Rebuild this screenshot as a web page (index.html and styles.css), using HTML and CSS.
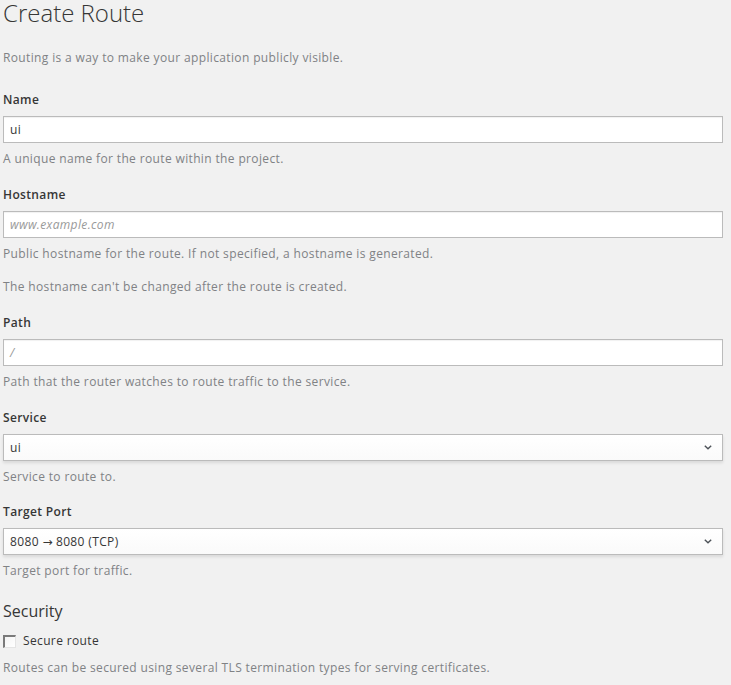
FILE: index.html
```html
<!DOCTYPE html>
<html lang="en">
<head>
<meta charset="utf-8">
<title>Create Route</title>
<link rel="stylesheet" href="styles.css">
</head>
<body>
<main class="page">
  <h1 class="title">Create Route</h1>
  <p class="intro">Routing is a way to make your application publicly visible.</p>

  <form class="form">
    <div class="group">
      <label class="label">Name</label>
      <div class="input">ui</div>
      <div class="help">A unique name for the route within the project.</div>
    </div>

    <div class="group">
      <label class="label">Hostname</label>
      <div class="input input--placeholder">www.example.com</div>
      <div class="help">Public hostname for the route. If not specified, a hostname is generated.</div>
      <div class="help help--second">The hostname can't be changed after the route is created.</div>
    </div>

    <div class="group">
      <label class="label">Path</label>
      <div class="input input--placeholder">/</div>
      <div class="help">Path that the router watches to route traffic to the service.</div>
    </div>

    <div class="group group--tight">
      <label class="label">Service</label>
      <div class="select">
        <span class="select-text">ui</span>
        <svg class="caret" width="8" height="5" viewBox="0 0 8 5"><path d="M0.8 0.8 L4 3.8 L7.2 0.8" fill="none" stroke="#4d5258" stroke-width="1.4"/></svg>
      </div>
      <div class="help">Service to route to.</div>
    </div>

    <div class="group">
      <label class="label">Target Port</label>
      <div class="select">
        <span class="select-text">8080 <span class="arrow">→</span> 8080 (TCP)</span>
        <svg class="caret" width="8" height="5" viewBox="0 0 8 5"><path d="M0.8 0.8 L4 3.8 L7.2 0.8" fill="none" stroke="#4d5258" stroke-width="1.4"/></svg>
      </div>
      <div class="help">Target port for traffic.</div>
    </div>

    <h2 class="section">Security</h2>
    <div class="check-row">
      <span class="checkbox"></span>
      <span class="check-label">Secure route</span>
    </div>
    <div class="help help--security">Routes can be secured using several TLS termination types for serving certificates.</div>
  </form>
</main>
</body>
</html>
```

FILE: styles.css
```css
html, body {
  margin: 0;
  padding: 0;
  background: #f1f1f1;
}

body {
  font-family: "Open Sans", "Liberation Sans", sans-serif;
  font-size: 12px;
  letter-spacing: 0.36px;
  color: #363636;
}

.page {
  padding: 0 8px 0 3px;
}

.title {
  margin: 0;
  font-size: 24px;
  line-height: 26px;
  font-weight: 300;
  letter-spacing: 0;
  color: #363636;
}

.intro {
  margin: 23px 0 24px;
  line-height: 18px;
  color: #808285;
}

.form {
  margin: 0;
}

.group {
  margin-bottom: 18px;
}

.group--tight {
  margin-bottom: 17px;
}

.label {
  display: block;
  font-weight: 600;
  line-height: 18px;
  margin-bottom: 7px;
  color: #363636;
}

.input {
  box-sizing: border-box;
  height: 27px;
  border: 1px solid #bbbbbb;
  background: #ffffff;
  box-shadow: inset 0 1px 1px rgba(3, 3, 3, 0.06);
  padding: 0 6px;
  line-height: 25px;
  font-size: 12px;
  color: #363636;
}

.input--placeholder {
  font-style: italic;
  color: #999999;
}

.select {
  box-sizing: border-box;
  height: 27px;
  border: 1px solid #bbbbbb;
  background: linear-gradient(#ffffff, #fafafa);
  box-shadow: 0 2px 3px rgba(3, 3, 3, 0.1);
  padding: 0 10px 0 6px;
  display: flex;
  align-items: center;
  justify-content: space-between;
  color: #363636;
}

.select-text {
  line-height: 25px;
}

.arrow {
  font-family: "DejaVu Sans", sans-serif;
  font-size: 12px;
  letter-spacing: 0;
}

.caret {
  display: block;
}

.help {
  margin-top: 7px;
  line-height: 18px;
  color: #808285;
}

.help--second {
  margin-top: 15px;
}

.section {
  margin: 21px 0 0;
  font-size: 16px;
  line-height: 20px;
  font-weight: 400;
  letter-spacing: 0;
  color: #363636;
}

.check-row {
  margin-top: 11px;
  display: flex;
  align-items: center;
  height: 18px;
}

.checkbox {
  box-sizing: border-box;
  width: 13px;
  height: 13px;
  border-top: 2px solid #7a7a7a;
  border-left: 2px solid #7a7a7a;
  border-right: 1px solid #e4e4e4;
  border-bottom: 1px solid #e4e4e4;
  background: linear-gradient(135deg, #f4f4f4, #ffffff);
  margin-right: 7px;
}

.check-label {
  line-height: 18px;
  color: #363636;
}

.help--security {
  margin-top: 9px;
}
```
